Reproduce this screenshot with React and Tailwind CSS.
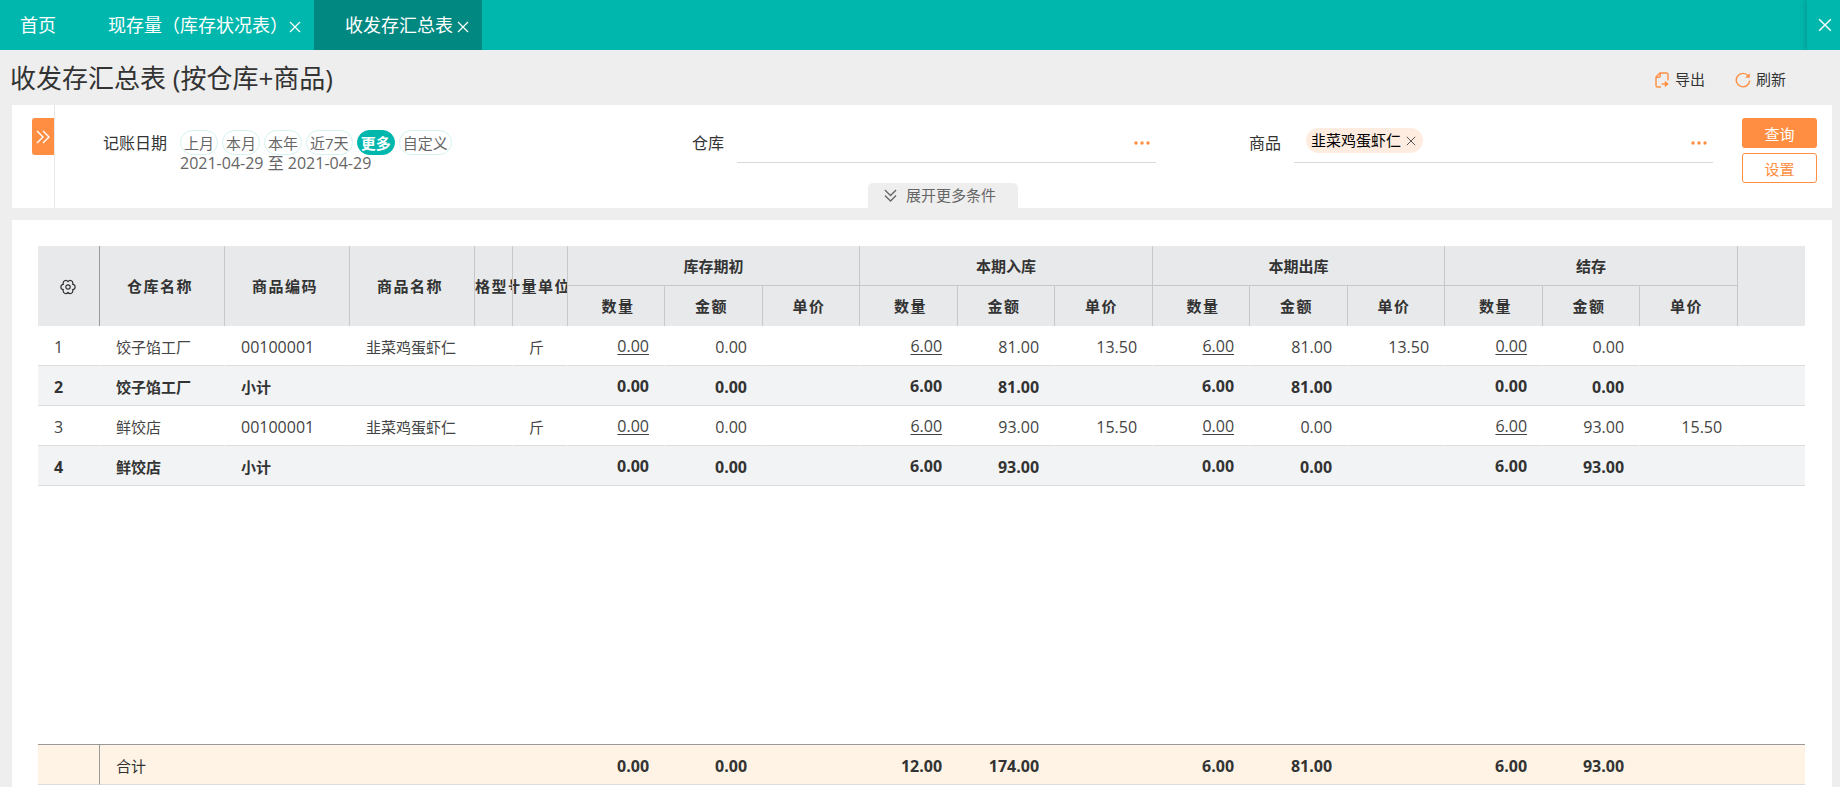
import React from "react";

const Cross = ({ className }) => (
  <svg className={className} viewBox="0 0 12 12" fill="none" stroke="currentColor" strokeWidth="1.2" aria-hidden="true">
    <path d="M1 1l10 10M11 1L1 11" />
  </svg>
);

const Chevrons = ({ className }) => (
  <svg className={className} viewBox="0 0 14 14" fill="none" stroke="currentColor" strokeWidth="1.4" aria-hidden="true">
    <path d="M1 1l6 6-6 6M7 1l6 6-6 6" />
  </svg>
);

const ExportIcon = () => (
  <svg className="h-4 w-4 text-[#ff8e42]" viewBox="0 0 16 16" fill="none" stroke="currentColor" strokeWidth="1.4" aria-hidden="true">
    <path d="M14 8.500V2.600Q14 1 12.400 1H6L2 5v8.400Q2 15 3.600 15H7" />
    <path d="M6.200 1v3Q6.200 5.200 5 5.200H2" />
    <path d="M7.500 12h6" />
    <path d="M11 9.200l3.400 2.800-3.400 2.800z" fill="currentColor" strokeWidth="0.500" />
  </svg>
);

const RefreshIcon = () => (
  <svg className="h-4 w-4 text-[#ff8e42]" viewBox="0 0 16 16" fill="none" stroke="currentColor" strokeWidth="1.4" aria-hidden="true">
    <path d="M13.300 4A6.700 6.700 0 1 0 14.700 8.500" />
    <path d="M14.600 1.600v4h-4z" fill="currentColor" strokeWidth="0.400" />
  </svg>
);

const GearIcon = () => (
  <svg className="h-4 w-4" viewBox="0 0 16 16" fill="none" stroke="currentColor" strokeWidth="1.2" aria-hidden="true">
    <path d="M12.600 5.300C16 5.600 16 10.400 12.600 10.700C13.800 14 9.900 16 8 13.300C6.100 16 2.200 14 3.400 10.700C0 10.400 0 5.600 3.400 5.300C2.200 2 6.100 0 8 2.700C9.900 0 13.800 2 12.600 5.300z" strokeLinejoin="round" />
    <circle cx="8" cy="8" r="2.200" />
  </svg>
);

const Dots = () => (
  <svg className="h-1 w-4" viewBox="0 0 16 4" fill="currentColor" aria-hidden="true">
    <circle cx="2" cy="2" r="1.700" />
    <circle cx="8" cy="2" r="1.700" />
    <circle cx="14" cy="2" r="1.700" />
  </svg>
);

const groups = ["库存期初", "本期入库", "本期出库", "结存"];
const measures = ["数量", "金额", "单价"];

const rows = [
  { n: 1, store: "饺子馅工厂", code: "00100001", name: "韭菜鸡蛋虾仁", unit: "斤", v: ["0.00", "0.00", "", "6.00", "81.00", "13.50", "6.00", "81.00", "13.50", "0.00", "0.00", ""] },
  { n: 2, store: "饺子馅工厂", code: "小计", sub: true, v: ["0.00", "0.00", "", "6.00", "81.00", "", "6.00", "81.00", "", "0.00", "0.00", ""] },
  { n: 3, store: "鲜饺店", code: "00100001", name: "韭菜鸡蛋虾仁", unit: "斤", v: ["0.00", "0.00", "", "6.00", "93.00", "15.50", "0.00", "0.00", "", "6.00", "93.00", "15.50"] },
  { n: 4, store: "鲜饺店", code: "小计", sub: true, v: ["0.00", "0.00", "", "6.00", "93.00", "", "0.00", "0.00", "", "6.00", "93.00", ""] },
];

const totals = ["0.00", "0.00", "", "12.00", "174.00", "", "6.00", "81.00", "", "6.00", "93.00", ""];

const Columns = () => (
  <colgroup>
    <col className="w-[62px]" />
    <col className="w-[125px]" />
    <col className="w-[125px]" />
    <col className="w-[125px]" />
    <col className="w-[38px]" />
    <col className="w-[55px]" />
    {totals.map((_, i) => (
      <col key={i} className={i % 2 ? "w-[98px]" : "w-[97px]"} />
    ))}
    <col />
  </colgroup>
);

const HeadText = ({ children, even }) => (
  <div className={"flex justify-center overflow-hidden tracking-widest whitespace-nowrap " + (even ? "pl-1" : "pr-1")}>
    <span className="shrink-0">{children}</span>
  </div>
);

const Pill = ({ active, children }) => (
  <button
    type="button"
    className={
      active
        ? "h-[25px] rounded-full border border-[#00b7ad] bg-[#00b7ad] px-[3px] font-bold text-white"
        : "h-[25px] rounded-full border border-[#d5f3f1] px-[3px]"
    }
  >
    <span className="block pt-px leading-[22px]">{children}</span>
  </button>
);

const fieldLabel = "mt-[26px] w-[113px] shrink-0 pr-px text-right text-base leading-6 text-[#333]";
const lookup = "mt-[13px] ml-3 flex h-[45px] flex-1 items-center border-b border-[#d9d9d9] pr-[6px]";

export default function App() {
  return (
    <div className="flex min-h-screen flex-col bg-[#eee] font-['Open_Sans','Noto_Sans_CJK_SC',sans-serif] text-[15px] text-[#333]">
      <nav className="flex h-[50px] bg-[#00b7ad] text-lg text-white">
        <a href="#home" className="flex items-center pl-5">首页</a>
        <div className="ml-[52px] flex items-center">
          <a href="#stock">现存量（库存状况表）</a>
          <button type="button" aria-label="关闭 现存量" className="mr-[13px] ml-px pt-[3px]"><Cross className="h-3 w-3" /></button>
        </div>
        <div className="flex items-center bg-[#018880] pr-[13px] pl-[31px]">
          <a href="#summary" aria-current="page">收发存汇总表</a>
          <button type="button" aria-label="关闭 收发存汇总表" className="ml-1 pt-[3px]"><Cross className="h-3 w-3" /></button>
        </div>
        <div className="ml-auto flex overflow-hidden pl-2">
          <button type="button" aria-label="关闭" className="flex w-[33px] items-center justify-center pl-[2px] shadow-[-2px_0_5px_rgba(0,0,0,0.15)]">
            <Cross className="h-[14px] w-[14px]" />
          </button>
        </div>
      </nav>

      <header className="flex h-[55px] items-center pr-[54px] pl-[10px]">
        <h1 className="text-[26px] leading-8 font-normal">收发存汇总表 (按仓库+商品)</h1>
        <div className="ml-auto flex gap-[30px] pt-1">
          <button type="button" className="flex items-center gap-[5px]"><ExportIcon />导出</button>
          <button type="button" className="flex items-center gap-[5px]"><RefreshIcon />刷新</button>
        </div>
      </header>

      <section className="relative mr-2 ml-3 flex h-[103px] bg-white pr-[15px]">
        <div className="w-[43px] border-r border-[#e8e8e8] pt-[13px] pl-5">
          <button type="button" aria-label="展开侧栏" className="flex h-[37px] w-[22px] items-center justify-center rounded-l-[3px] bg-[#ff8e42] text-white">
            <Chevrons className="h-[14px] w-[14px]" />
          </button>
        </div>
        <div className="grid flex-1 grid-cols-3">
          <div className="flex">
            <span className={fieldLabel}>记账日期</span>
            <div className="ml-3 pt-[25px] text-[#666]">
              <div className="flex gap-1" role="group" aria-label="记账日期">
                <Pill>上月</Pill>
                <Pill>本月</Pill>
                <Pill>本年</Pill>
                <Pill>近7天</Pill>
                <Pill active>更多</Pill>
                <Pill>自定义</Pill>
              </div>
              <p className="text-base leading-4">2021-04-29 至 2021-04-29</p>
            </div>
          </div>
          <div className="flex pr-[13px]">
            <label htmlFor="store" className={fieldLabel}>仓库</label>
            <div className={lookup}>
              <input id="store" className="min-w-0 flex-1 outline-none" />
              <button type="button" aria-label="选择仓库" className="pt-[6px] text-[#ff8e42]"><Dots /></button>
            </div>
          </div>
          <div className="flex pr-[13px]">
            <label htmlFor="goods" className={fieldLabel}>商品</label>
            <div className={lookup}>
              <span className="ml-3 flex h-[25px] items-center gap-[5px] rounded-full bg-[#ffece1] pr-[7px] pl-[5px] text-black">
                韭菜鸡蛋虾仁
                <button type="button" aria-label="移除" className="pt-[2px] text-[#555]"><Cross className="h-[10px] w-[10px]" /></button>
              </span>
              <input id="goods" className="min-w-0 flex-1 outline-none" />
              <button type="button" aria-label="选择商品" className="pt-[6px] text-[#ff8e42]"><Dots /></button>
            </div>
          </div>
        </div>
        <div className="ml-4 flex w-[75px] flex-col gap-[5px] pt-[13px]">
          <button type="button" className="h-[30px] rounded-[3px] bg-[#ff8e42] pt-[2px] text-white">查询</button>
          <button type="button" className="h-[30px] rounded-[3px] border border-[#ff8e42] pt-[2px] text-[#ff8e42]">设置</button>
        </div>
        <button type="button" className="absolute bottom-0 left-[856px] flex h-[25px] w-[150px] items-center gap-[9px] rounded-t-[5px] bg-[#eee] pl-4 text-[#666]">
          <Chevrons className="h-[13px] w-[13px] rotate-90" />展开更多条件
        </button>
      </section>

      <main className="mt-3 mr-2 ml-3 flex flex-1 flex-col bg-white pt-[26px] pr-[27px] pb-[2px] pl-[26px]">
        <table className="w-full table-fixed border-separate border-spacing-0">
          <Columns />
          <thead className="bg-[#e7e9ea]">
            <tr className="h-10">
              <th rowSpan={2} className="border-r border-[#999] p-0">
                <button type="button" aria-label="列设置" className="block pt-px pl-[22px]"><GearIcon /></button>
              </th>
              {["仓库名称", "商品编码", "商品名称", "规格型号", "计量单位"].map((h) => (
                <th key={h} rowSpan={2} className="border-r border-[#c6c8ca] p-0 pt-px font-bold"><HeadText>{h}</HeadText></th>
              ))}
              {groups.map((g) => (
                <th key={g} colSpan={3} className="border-r border-b border-[#c6c8ca] p-0 pt-[2px] font-bold">{g}</th>
              ))}
              <th rowSpan={2} className="p-0" />
            </tr>
            <tr className="h-10">
              {groups.map((g) =>
                measures.map((m, i) => (
                  <th key={g + m} className="border-r border-[#c6c8ca] p-0 font-bold"><HeadText even={i === 0}>{m}</HeadText></th>
                ))
              )}
            </tr>
          </thead>
          <tbody>
            {rows.map((r) => {
              const edge = r.sub
                ? "border-r border-b border-r-[#f2f3f5] border-b-[#dcdddd] whitespace-nowrap "
                : "border-r border-b border-r-white border-b-[#dcdddd] whitespace-nowrap ";
              const text = edge + "px-4 pt-[3px] pb-0";
              const number = edge + "px-[15px] pb-0 text-right text-base";
              return (
                <tr key={r.n} className={r.sub ? "h-10 bg-[#f2f3f5] font-bold" : "h-10 text-[#444]"}>
                  <td className={text + " text-base"}>{r.n}</td>
                  <td className={text}>{r.store}</td>
                  <td className={r.sub ? text : text + " text-base"}>{r.code}</td>
                  <td className={text}>{r.name}</td>
                  <td className={text} />
                  <td className={text}>{r.unit}</td>
                  {r.v.map((v, i) =>
                    i % 3 === 0 ? (
                      <td key={i} className={number + " pt-0"}>
                        {r.sub ? v : <a href="#detail" className="underline underline-offset-2">{v}</a>}
                      </td>
                    ) : (
                      <td key={i} className={number + " pt-[3px]"}>{v}</td>
                    )
                  )}
                  <td className="border-b border-[#dcdddd]" />
                </tr>
              );
            })}
          </tbody>
        </table>

        <table className="mt-auto w-full table-fixed border-separate border-spacing-0 bg-[#fef3e5]" aria-label="合计">
          <Columns />
          <tbody>
            <tr className="h-[41px]">
              <td className="border-t border-r border-b border-[#999] border-b-[#dcdddd] p-0" />
              <th scope="row" colSpan={5} className="border-t border-b border-t-[#999] border-b-[#dcdddd] px-4 pt-[3px] pb-0 text-left font-normal">合计</th>
              {totals.map((v, i) => (
                <td key={i} className="border-t border-b border-t-[#999] border-b-[#dcdddd] px-4 pt-[3px] pb-0 text-right text-base font-bold">{v}</td>
              ))}
              <td className="border-t border-b border-t-[#999] border-b-[#dcdddd] p-0" />
            </tr>
          </tbody>
        </table>
      </main>
    </div>
  );
}
